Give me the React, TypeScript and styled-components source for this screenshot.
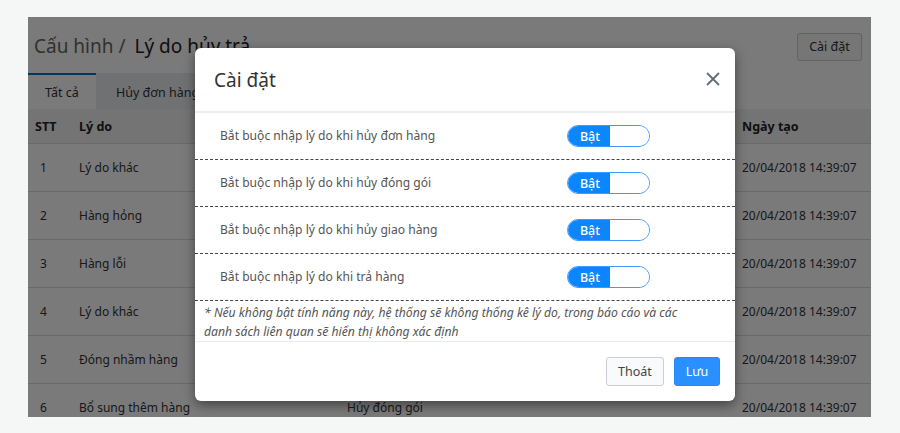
import styled, { createGlobalStyle } from "styled-components";

const GlobalStyle = createGlobalStyle`
  html, body {
    margin: 0;
    padding: 0;
    background: #f5f7f7;
    font-family: "Noto Sans", "Open Sans", sans-serif;
    color: #333;
  }
`;

const reasons = [
  { id: 1, name: "Lý do khác", type: "Hủy đơn hàng" },
  { id: 2, name: "Hàng hỏng", type: "Hủy đơn hàng" },
  { id: 3, name: "Hàng lỗi", type: "Hủy giao hàng" },
  { id: 4, name: "Lý do khác", type: "Trả hàng" },
  { id: 5, name: "Đóng nhầm hàng", type: "Hủy đóng gói" },
  { id: 6, name: "Bổ sung thêm hàng", type: "Hủy đóng gói" },
];

const settings = [
  "Bắt buộc nhập lý do khi hủy đơn hàng",
  "Bắt buộc nhập lý do khi hủy đóng gói",
  "Bắt buộc nhập lý do khi hủy giao hàng",
  "Bắt buộc nhập lý do khi trả hàng",
];

const App: React.FC = () => {
  return (
    <>
      <GlobalStyle />
      <Page>
        <Frame>
          <TopBar>
            <Title>
              <Crumb>Cấu hình /</Crumb> Lý do hủy trả
            </Title>
            <OutlineButton>Cài đặt</OutlineButton>
          </TopBar>

          <Tabs>
            <Tab active>Tất cả</Tab>
            <Tab>Hủy đơn hàng</Tab>
          </Tabs>

          <Table>
            <HeadRow>
              <Cell>STT</Cell>
              <Cell>Lý do</Cell>
              <Cell>Loại</Cell>
              <Cell>Ngày tạo</Cell>
            </HeadRow>
            {reasons.map((r) => (
              <Row key={r.id}>
                <Cell center>{r.id}</Cell>
                <Cell>{r.name}</Cell>
                <Cell>{r.type}</Cell>
                <Cell>20/04/2018 14:39:07</Cell>
              </Row>
            ))}
          </Table>

          <Backdrop>
            <Modal>
              <ModalHeader>
                <ModalTitle>Cài đặt</ModalTitle>
                <CloseButton aria-label="Đóng">
                  <svg width="14" height="14" viewBox="0 0 14 14">
                    <path
                      d="M1.5 1.5 L12.5 12.5 M12.5 1.5 L1.5 12.5"
                      stroke="#5f6b77"
                      strokeWidth="1.8"
                      strokeLinecap="round"
                    />
                  </svg>
                </CloseButton>
              </ModalHeader>

              <ModalBody>
                {settings.map((label) => (
                  <SettingRow key={label}>
                    <SettingLabel>{label}</SettingLabel>
                    <Toggle>
                      <ToggleOn>Bật</ToggleOn>
                      <ToggleOff />
                    </Toggle>
                  </SettingRow>
                ))}
                <Note>
                  * Nếu không bật tính năng này, hệ thống sẽ không thống kê lý
                  do, trong báo cáo và các danh sách liên quan sẽ hiển thị không
                  xác định
                </Note>
              </ModalBody>

              <ModalFooter>
                <Button>Thoát</Button>
                <Button primary>Lưu</Button>
              </ModalFooter>
            </Modal>
          </Backdrop>
        </Frame>
      </Page>
    </>
  );
};

const Page = styled.div`
  width: 900px;
  height: 433px;
  padding: 17px 29px 16px 28px;
  box-sizing: border-box;
`;

const Frame = styled.div`
  position: relative;
  height: 100%;
  background: #fff;
  overflow: hidden;
`;

const TopBar = styled.div`
  display: flex;
  align-items: center;
  justify-content: space-between;
  height: 55px;
  padding: 1px 9px 0 6px;
`;

const Title = styled.h1`
  margin: 0;
  font-size: 19px;
  font-weight: 400;
  color: #222;
`;

const Crumb = styled.span`
  color: #666;
  margin-right: 4px;
`;

const OutlineButton = styled.button`
  font-family: inherit;
  font-size: 12.5px;
  color: #333;
  background: #f7f7f7;
  border: 1px solid #ccc;
  border-radius: 3px;
  height: 28px;
  width: 65px;
  padding: 0;
  margin-top: 2px;
`;

const Tabs = styled.div`
  display: flex;
  height: 36px;
`;

const Tab = styled.div<{ active?: boolean }>`
  display: flex;
  align-items: center;
  padding: 0 ${({ active }) => (active ? "0 0 17px" : "20px")};
  font-size: 12.5px;
  color: #333;
  background: ${({ active }) => (active ? "#fff" : "#ebedef")};
  border-top: 2px solid ${({ active }) => (active ? "#0d6fd1" : "transparent")};
  box-sizing: border-box;
  width: ${({ active }) => (active ? "68px" : "auto")};
`;

const Table = styled.div`
  display: flex;
  flex-direction: column;
`;

const rowGrid = `
  display: grid;
  grid-template-columns: 44px 268px 395px 1fr;
  align-items: center;
  font-size: 12px;
  padding-left: 7px;
  border-bottom: 1px solid #dcdcdc;
`;

const HeadRow = styled.div`
  ${rowGrid}
  height: 34px;
  font-size: 12.5px;
  font-weight: 700;
  background: #f3f3f3;
  color: #222;
`;

const Row = styled.div`
  ${rowGrid}
  height: 47px;
  color: #333;
`;

const Cell = styled.div<{ center?: boolean }>`
  padding-left: ${({ center }) => (center ? "5px" : "0")};
  white-space: nowrap;
`;

const Backdrop = styled.div`
  position: absolute;
  inset: 0;
  background: rgba(0, 0, 0, 0.52);
  padding: 31px 0 0 167px;
`;

const Modal = styled.div`
  width: 540px;
  height: 353px;
  background: #fff;
  border-radius: 6px;
  box-shadow: 0 4px 12px rgba(0, 0, 0, 0.45);
  display: flex;
  flex-direction: column;
  overflow: hidden;
`;

const ModalHeader = styled.div`
  display: flex;
  align-items: center;
  justify-content: space-between;
  height: 63px;
  padding: 0 15px 0 19px;
  border-bottom: 2px solid #eceef0;
`;

const ModalTitle = styled.h2`
  margin: 0;
  font-size: 19px;
  font-weight: 400;
  color: #333;
`;

const CloseButton = styled.button`
  border: none;
  background: none;
  padding: 0;
  display: flex;
  margin-top: -2px;
`;

const ModalBody = styled.div`
  flex: 1;
`;

const SettingRow = styled.div`
  display: flex;
  align-items: center;
  justify-content: space-between;
  height: 46px;
  padding: 0 85px 0 25px;
  border-bottom: 1px dashed #444;
`;

const SettingLabel = styled.span`
  font-size: 12.1px;
  color: #555;
  margin-top: -2px;
`;

const Toggle = styled.div`
  display: flex;
  width: 83px;
  height: 22px;
  border: 1px solid #3d9bff;
  border-radius: 11px;
  overflow: hidden;
  box-sizing: border-box;
`;

const ToggleOn = styled.span`
  width: 40px;
  background: #0c86ff;
  color: #fff;
  font-size: 12.5px;
  font-weight: 500;
  display: flex;
  align-items: center;
  justify-content: center;
  padding-left: 2px;
`;

const ToggleOff = styled.span`
  flex: 1;
  background: #fff;
`;

const Note = styled.p`
  margin: 0;
  padding: 2px 50px 0 9px;
  height: 40px;
  box-sizing: border-box;
  font-size: 12.2px;
  line-height: 19px;
  font-style: italic;
  color: #555;
`;

const ModalFooter = styled.div`
  display: flex;
  justify-content: flex-end;
  align-items: center;
  gap: 10px;
  height: 59px;
  padding: 0 15px;
  border-top: 1px solid #e9ecef;
`;

const Button = styled.button<{ primary?: boolean }>`
  font-family: inherit;
  font-size: 12.5px;
  height: 29px;
  width: ${({ primary }) => (primary ? "46px" : "58px")};
  padding: 0;
  border-radius: 3px;
  border: 1px solid ${({ primary }) => (primary ? "#1f8bff" : "#ccd")};
  background: ${({ primary }) => (primary ? "#2a90ff" : "#f9fafb")};
  color: ${({ primary }) => (primary ? "#fff" : "#444")};
`;

export default App;
